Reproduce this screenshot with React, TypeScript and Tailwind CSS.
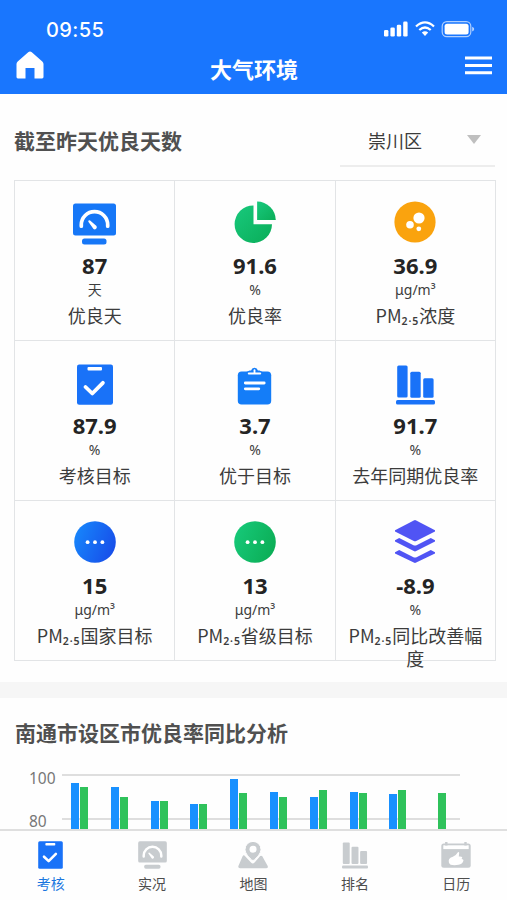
import type { ReactNode } from "react";

type Metric = {
  icon: ReactNode;
  iconPad: string;
  value: string;
  unit: string;
  label: string;
};

function HomeIcon() {
  return (
    <svg width="28" height="28" viewBox="0 0 28 28" fill="white">
      <path d="M12.200 1.200q1.800-1.600 3.600 0l10.500 9.300q1.200 1.100 1.200 2.600v13q0 1.400-1.400 1.400H18.500V17h-9v10.500H1.900q-1.400 0-1.400-1.400v-13q0-1.500 1.200-2.600z" />
    </svg>
  );
}

function MenuIcon() {
  return (
    <svg width="27" height="19" viewBox="0 0 27 19" fill="white">
      <path d="M0 .5h27v3H0zM0 8h27v3H0zM0 15.300h27v3H0z" />
    </svg>
  );
}

function StatusIcons() {
  return (
    <svg width="92" height="18" viewBox="0 0 92 18" fill="white">
      <rect x="1" y="10" width="4.400" height="6.500" rx="1.300" />
      <rect x="7.400" y="7.500" width="4.400" height="9" rx="1.300" />
      <rect x="13.800" y="4.700" width="4.400" height="11.800" rx="1.300" />
      <rect x="20.200" y="1.600" width="4.400" height="14.900" rx="1.300" />
      <g fill="none" stroke="white" strokeWidth="2.300">
        <path d="M33 6.500q9-8.200 18 0" />
        <path d="M36.300 10q5.700-5 11.400 0" />
      </g>
      <path d="M38.800 12.600q3.200-2.500 6.400 0L42 16.100z" />
      <rect x="59.200" y="1.600" width="28.600" height="15" rx="4.600" fill="none" stroke="white" strokeOpacity=".65" strokeWidth="1.200" />
      <rect x="61.600" y="3.800" width="24" height="10.600" rx="2.500" />
      <path d="M89.200 6.700q2 .8 2 2.400t-2 2.400z" opacity=".7" />
    </svg>
  );
}

function GaugeIcon({ className = "" }: { className?: string }) {
  return (
    <svg className={className} viewBox="0 0 43 42" fill="currentColor">
      <rect x="0" y="0.4" width="43" height="32" rx="2.5" />
      <rect x="9" y="35.5" width="24.5" height="6" rx="2.5" />
      <path d="M8.300 23.200v-1.400a13.200 13.200 0 0 1 26.400 0v1.400" fill="none" stroke="white" strokeWidth="3.7" strokeLinecap="round" />
      <path d="M15.600 17.600q.8-.7 1.500 0l6.400 5.500a2.200 2.200 0 0 1-3 3l-5-7q-.6-.8.1-1.500z" fill="white" />
    </svg>
  );
}

function PieIcon() {
  return (
    <svg width="42" height="42" viewBox="0 0 42 42">
      <defs>
        <linearGradient id="pie" x1="0" x2="1" y1="0" y2="1">
          <stop stopColor="#18c97d" />
          <stop offset="1" stopColor="#0aad58" />
        </linearGradient>
      </defs>
      <g fill="url(#pie)">
        <path d="M19.500 4.500v18.800h18.500A18.700 18.700 0 1 1 19.500 4.500z" />
        <path d="M23.100.6a18.800 18.800 0 0 1 18.700 18.500H23.100z" />
      </g>
    </svg>
  );
}

function ParticlesIcon() {
  return (
    <svg width="42" height="42" viewBox="0 0 42 42">
      <circle cx="21" cy="21" r="20.6" fill="#faa30e" />
      <g fill="white">
        <circle cx="25" cy="17" r="5.6" />
        <circle cx="16" cy="23.8" r="3.8" />
        <circle cx="24.8" cy="27.8" r="2.4" />
      </g>
    </svg>
  );
}

function CheckSheetIcon({ className = "" }: { className?: string }) {
  return (
    <svg className={className} viewBox="0 0 36 41" fill="currentColor">
      <rect x="0" y="0.4" width="36" height="40.4" rx="2.2" />
      <rect x="10.5" y="3" width="14.5" height="3.6" rx="1" fill="white" />
      <path d="M8.500 23l6.800 6.500L25.900 18.800" fill="none" stroke="white" strokeWidth="3.8" strokeLinecap="round" strokeLinejoin="round" />
    </svg>
  );
}

function ClipboardIcon() {
  return (
    <svg width="35" height="39" viewBox="0 0 35 39">
      <rect x="0.8" y="5.500" width="33.400" height="33" rx="3.800" fill="#147df8" />
      <path d="M9.500 6l3-1.500h1.600a3.500 3.500 0 0 1 6.800 0h1.600l3 1.500v3h-16z" fill="#147df8" />
      <path d="M11.800 7.400h11.400" stroke="white" strokeWidth="2" strokeLinecap="round" />
      <path d="M17.500 4.200v3" stroke="white" strokeWidth="1.800" strokeLinecap="round" />
      <path d="M8.300 17h18.900M8.300 22.800h13.500" stroke="white" strokeWidth="2.800" strokeLinecap="round" />
    </svg>
  );
}

function BarsIcon({ className = "" }: { className?: string }) {
  return (
    <svg className={className} viewBox="0 0 39 40" fill="currentColor">
      <rect x="1.200" y="0.6" width="10.400" height="32" rx="1.500" />
      <rect x="14.300" y="6.700" width="10.400" height="26" rx="1.500" />
      <rect x="27.200" y="13.300" width="10.400" height="19.400" rx="1.500" />
      <rect x="0" y="35" width="39" height="4.600" rx="1.600" />
    </svg>
  );
}

function DotsIcon({ id, from, to }: { id: string; from: string; to: string }) {
  return (
    <svg width="42" height="42" viewBox="0 0 42 42">
      <defs>
        <linearGradient id={id} x1="0" x2="1" y1="0.3" y2="0.7">
          <stop stopColor={from} />
          <stop offset="1" stopColor={to} />
        </linearGradient>
      </defs>
      <circle cx="21" cy="21" r="20.8" fill={`url(#${id})`} />
      <g fill="white">
        <circle cx="13.6" cy="21.2" r="1.9" />
        <circle cx="21" cy="21.2" r="1.9" />
        <circle cx="28.4" cy="21.2" r="1.9" />
      </g>
    </svg>
  );
}

function LayersIcon() {
  return (
    <svg width="42" height="43" viewBox="0 0 42 43" fill="#5054f4">
      <path d="M19.800.4q1.200-.6 2.400 0L41 10.200v1.200L22.200 20.900q-1.200.6-2.400 0L1 11.400v-1.200z" />
      <path d="M1 20.300l4.200-2.200 13.800 6.800q2 1 4 0l13.800-6.800 4.200 2.200v1.300L22.200 31.100q-1.200.6-2.400 0L1 21.600z" />
      <path d="M1 32.300l4.200-2.200 13.800 6.800q2 1 4 0l13.800-6.800 4.200 2.200v1.300L22.200 42.600q-1.200.6-2.400 0L1 33.600z" />
    </svg>
  );
}

function MapIcon() {
  return (
    <svg width="30" height="28" viewBox="0 0 30 28" fill="currentColor">
      <path d="M4.600 15.200q.6-1.200 1.800-.8l6.600 7.200q1.800 2 3.600 0l5.600-6.500q1-1 2.100.2L29.700 25q.7 2.200-1.600 2.200H2q-2.200 0-1.600-2.200z" />
      <path d="M15 .4a8 8 0 0 1 8 8c0 4.200-4.600 8.500-6.600 10.500q-1.400 1.300-2.800 0C11.600 16.900 7 12.600 7 8.400a8 8 0 0 1 8-8z" stroke="white" strokeWidth="1" />
      <circle cx="15" cy="8.200" r="3.500" fill="white" />
    </svg>
  );
}

function CalendarIcon() {
  return (
    <svg width="30" height="26" viewBox="0 0 30 26" fill="currentColor">
      <rect x="0.3" y="1.500" width="29.400" height="24.300" rx="2.500" />
      <path d="M2.300 3.300h25.400v3.800H2.300z" fill="white" />
      <path d="M5.300 0v3.500M24.500 0v3.500" stroke="currentColor" strokeWidth="2.400" />
      <path d="M7.700 18.800q.2-3 3.700-3.900 3.600-1 5.500-4.600.8-1 1.300.5l-.4 3.700q2.800-.3 3.500.7l-.7 1.900q2 .2 1.900 1.300-1.100 3.700-4.900 4.400-4.600.8-8-.1-2.200-.9-1.900-3.900z" fill="white" />
    </svg>
  );
}

const metrics: Metric[] = [
  { icon: <GaugeIcon className="h-[42px] w-[43px] text-[#1677f7]" />, iconPad: "pt-[22px]", value: "87", unit: "天", label: "优良天" },
  { icon: <PieIcon />, iconPad: "pt-5", value: "91.6", unit: "%", label: "优良率" },
  { icon: <ParticlesIcon />, iconPad: "pt-5", value: "36.9", unit: "μg/m³", label: "PM₂.₅浓度" },
  { icon: <CheckSheetIcon className="h-[41px] w-9 text-[#1972f8]" />, iconPad: "pt-[23px]", value: "87.9", unit: "%", label: "考核目标" },
  { icon: <ClipboardIcon />, iconPad: "pt-[25px]", value: "3.7", unit: "%", label: "优于目标" },
  { icon: <BarsIcon className="h-10 w-[39px] text-[#1972f8]" />, iconPad: "pt-6", value: "91.7", unit: "%", label: "去年同期优良率" },
  { icon: <DotsIcon id="country" from="#1785fb" to="#174de9" />, iconPad: "pt-5", value: "15", unit: "μg/m³", label: "PM₂.₅国家目标" },
  { icon: <DotsIcon id="province" from="#16c878" to="#0bad55" />, iconPad: "pt-5", value: "13", unit: "μg/m³", label: "PM₂.₅省级目标" },
  { icon: <LayersIcon />, iconPad: "pt-[19px]", value: "-8.9", unit: "%", label: "PM₂.₅同比改善幅度" },
];

// visible bar heights, [this year, last year]
const bars = [
  [46, 42],
  [42, 32],
  [28, 28],
  [25, 25],
  [50, 36],
  [37, 32],
  [32, 39],
  [37, 36],
  [35, 39],
  [0, 36],
];

const tabs = [
  { label: "考核", icon: <CheckSheetIcon className="h-7 w-[25px]" />, active: true },
  { label: "实况", icon: <GaugeIcon className="h-7 w-[29px]" /> },
  { label: "地图", icon: <MapIcon /> },
  { label: "排名", icon: <BarsIcon className="h-[27px] w-[26px]" /> },
  { label: "日历", icon: <CalendarIcon /> },
];

function MetricLabel({ text }: { text: string }) {
  if (!text.startsWith("PM₂.₅")) return <>{text}</>;
  return (
    <>
      PM<span className="inline-block translate-y-[2px] font-['Noto_Sans'] text-[10.5px] leading-none font-semibold tracking-[0.9px]">2·5</span>
      {text.slice(5)}
    </>
  );
}

function Header() {
  return (
    <header className="h-[94px] shrink-0 bg-[#1976fe] text-white">
      <div className="flex h-[46px] items-start justify-between pt-5 pr-8 pl-[46px]">
        <span className="font-['Inter'] text-[20px] leading-5 font-medium tracking-[0.4px]">09:55</span>
        <StatusIcons />
      </div>
      <div className="grid h-12 grid-cols-[1fr_auto_1fr] items-center pr-[15px] pl-4">
        <span className="-mt-[10px]"><HomeIcon /></span>
        <h1 className="-mt-1 text-[22px] leading-8 font-bold">大气环境</h1>
        <span className="-mt-[9px] justify-self-end"><MenuIcon /></span>
      </div>
    </header>
  );
}

function MetricCell({ icon, iconPad, value, unit, label }: Metric) {
  return (
    <div className="flex h-40 min-w-0 flex-col items-center border-r border-b border-[#e2e4e6]">
      <div className={`h-[72px] shrink-0 ${iconPad}`}>{icon}</div>
      <div className="h-[26px] shrink-0 font-['Noto_Sans'] text-[22px] leading-6 font-bold text-[#242424]">{value}</div>
      <div className="h-[22px] shrink-0 font-['Noto_Sans','Noto_Sans_CJK_SC',sans-serif] text-sm leading-[22px]">{unit}</div>
      <div className="w-full shrink-0 px-2 pt-[3px] text-center text-[18px] leading-[23px]">
        <MetricLabel text={label} />
      </div>
    </div>
  );
}

function Chart() {
  return (
    <div className="mt-[26px] flex pl-[29px] text-[#777]">
      <div className="w-[33px] font-['Noto_Sans'] text-[15.5px] leading-[18px]">
        <p className="-mt-[5px] h-[43px]">100</p>
        <p>80</p>
      </div>
      <div className="relative h-[55px] w-[398px] border-t-2 border-[#dedede]">
        <div className="absolute top-[42px] h-0.5 w-full bg-[#dedede]" />
        <div className="absolute inset-x-0 bottom-0 grid grid-cols-10 items-end">
          {bars.map(([current, previous], i) => (
            <div key={i} className="flex items-end gap-px pl-[9px]">
              <div className="w-2 bg-[#1890ff]" style={{ height: current }} />
              <div className="w-2 bg-[#2fc25b]" style={{ height: previous }} />
            </div>
          ))}
        </div>
      </div>
    </div>
  );
}

function TabBar() {
  return (
    <nav className="grid h-[71px] shrink-0 grid-cols-5 border-t-2 border-[#dfdfdf] bg-[#fefefe]">
      {tabs.map((tab) => (
        <div key={tab.label} className="flex flex-col items-center">
          <div className={`flex h-[46px] items-center pt-[2px] ${tab.active ? "text-[#1972f8]" : "text-[#c8cccf]"}`}>{tab.icon}</div>
          <span className={`-mt-1 text-[14px] leading-5 ${tab.active ? "text-[#1976df]" : "text-[#4d4d4d]"}`}>{tab.label}</span>
        </div>
      ))}
    </nav>
  );
}

export default function App() {
  return (
    <div className="flex h-[900px] w-[507px] flex-col overflow-hidden bg-[#fefefe] font-['Noto_Sans_CJK_SC',sans-serif] text-[#3c3c3c]">
      <Header />
      <main className="min-h-0 flex-1 overflow-hidden">
        <section className="h-[588px] px-[14px]">
          <div className="flex h-[86px] items-start justify-between pt-6">
            <h2 className="pt-1.5 text-[21px] leading-8 font-bold text-[#505050]">截至昨天优良天数</h2>
            <div className="-mr-0.5 flex h-[49px] w-[155px] items-center justify-between border-b-2 border-[#ededed] pr-[14px] pb-1 pl-7">
              <span className="text-[18px] leading-6">崇川区</span>
              <span className="border-x-[7px] border-t-[9px] border-x-transparent border-t-[#bfbfbf]" />
            </div>
          </div>
          <div className="grid w-[482px] grid-cols-3 border-t border-l border-[#e2e4e6]">
            {metrics.map((metric) => (
              <MetricCell key={metric.label} {...metric} />
            ))}
          </div>
        </section>
        <div className="h-4 bg-[#f6f6f6]" />
        <section className="pt-[18px]">
          <h2 className="px-[15px] text-[21px] leading-8 font-bold text-[#505050]">南通市设区市优良率同比分析</h2>
          <Chart />
        </section>
      </main>
      <TabBar />
    </div>
  );
}
